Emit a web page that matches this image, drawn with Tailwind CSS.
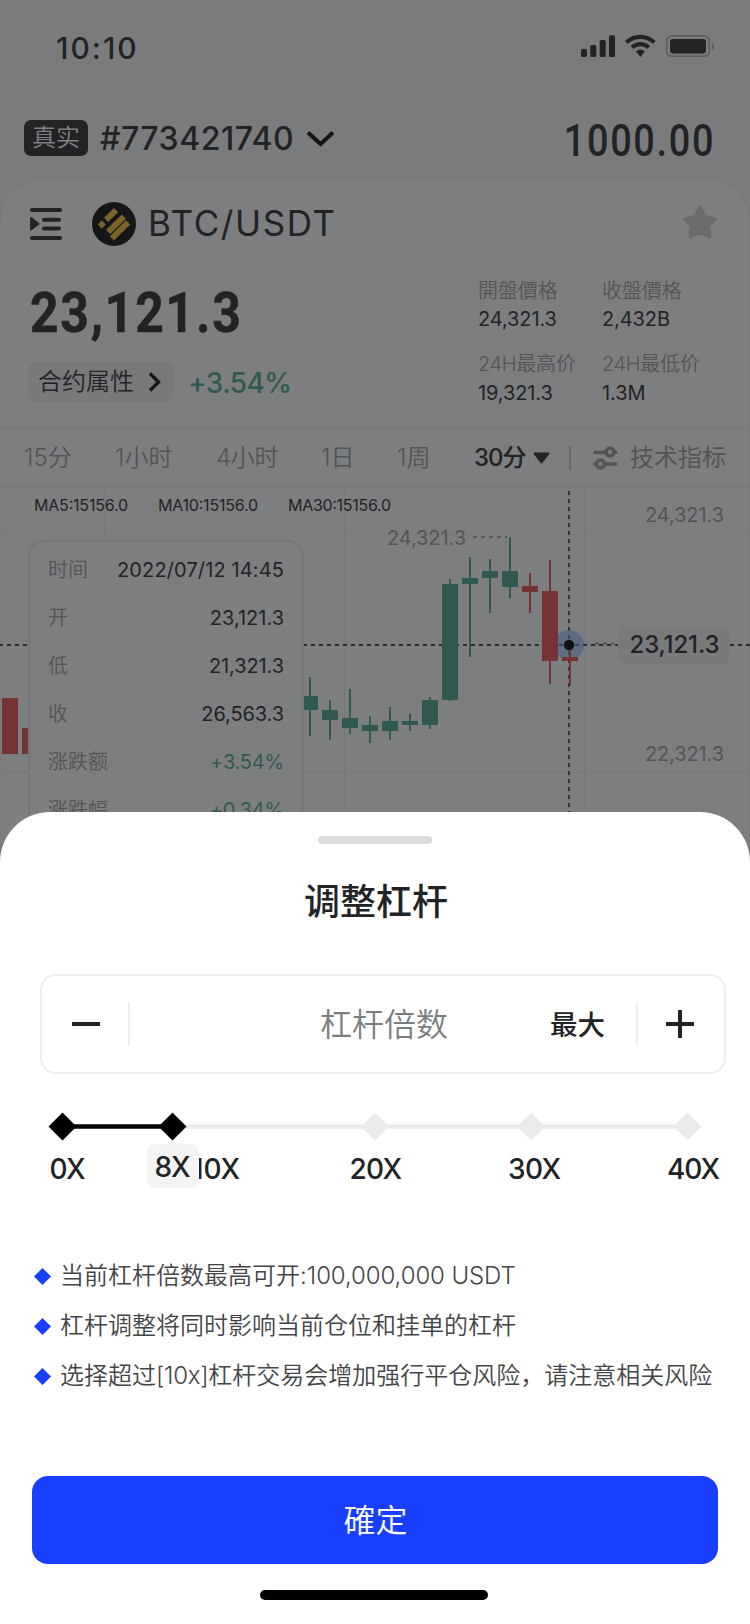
<!DOCTYPE html>
<html lang="zh">
<head>
<meta charset="utf-8">
<title>BTC/USDT</title>
<script src="https://cdn.jsdelivr.net/npm/@tailwindcss/browser@4"></script>
</head>
<body class="bg-[#7a7b7d]">
<div class="relative h-[1624px] w-[750px] overflow-hidden bg-[#7a7b7d] font-[Inter,'Noto_Sans_CJK_SC',sans-serif] whitespace-nowrap text-[#222325]">

  <!-- status bar -->
  <header class="flex h-[96px] items-center justify-between pr-9 pl-[56px]">
    <span class="text-[30px] leading-none font-[450] tracking-[2px]">10:10</span>
    <svg class="-mt-1" width="134" height="24" viewBox="0 0 134 24" fill="#222325">
      <rect x="1" y="15" width="6" height="8" rx="1.6"/><rect x="10.300" y="11" width="6" height="12" rx="1.600"/><rect x="19.700" y="6" width="6" height="17" rx="1.600"/><rect x="29" y="1.300" width="6" height="21.700" rx="1.600"/>
      <path d="M45 6.900C53.500-1.300 67.100-1.300 75.700 6.900L73 9.700C66 3.400 54.700 3.400 47.700 9.700Z"/>
      <path d="M50.600 12C56 6.700 64.700 6.700 70.200 12L67.300 14.800C63.300 11.300 57.400 11.300 53.500 14.800Z"/>
      <path d="M56 17.300Q60.400 13.800 64.800 17.300L60.400 23Z"/>
      <rect x="86.700" y="1.700" width="42.600" height="20.600" rx="5.500" fill="none" stroke="#5c5d5f" stroke-width="1.600"/>
      <rect x="90" y="5" width="36" height="14.500" rx="3"/>
      <path d="M132 8.500q2.400 1.200 2.400 3.700t-2.400 3.700z" fill="#5c5d5f"/>
    </svg>
  </header>

  <!-- account -->
  <section class="flex h-[84px] items-center pr-[35px] pl-6">
    <span class="flex h-9 w-16 items-center justify-center rounded-[7px] bg-[#222325] text-2xl font-[350] text-[#808183]">真实</span>
    <span class="mt-0.5 ml-[12px] w-[206px] text-[32px] leading-none font-[450] tracking-[0.5px]">#773421740</span>
    <svg class="mt-0.5" width="28" height="18" viewBox="0 0 28 18" fill="none" stroke="#151618" stroke-width="4"><path d="M2 2.500L14.500 14 27 2.500"/></svg>
    <span class="mt-[5px] ml-auto origin-right scale-x-[.86] font-[Roboto,sans-serif] text-[44px] leading-none font-medium tracking-[2px]">1000.00</span>
  </section>

  <!-- market card -->
  <main class="h-[700px] rounded-t-[40px] border border-[#78797b] bg-[#7d7e80]">
    <div class="flex h-[86px] items-center pr-[31px] pl-[29px]">
      <svg width="32" height="32" viewBox="0 0 32 32" stroke="#222325" stroke-width="4" stroke-linecap="round" fill="#222325"><path d="M2 2H30M14 11.700H29M14 20.500H29M2 30H30" /><path d="M1 10L8.500 15.700 1 21.500Z" stroke-width="2" stroke-linejoin="round"/></svg>
      <svg class="ml-[30px]" width="44" height="44" viewBox="0 0 44 44"><circle cx="22" cy="22" r="22" fill="#151618"/><g fill="#7a6429"><path d="M22 6L26.200 10.200 16.200 20 12 15.800Z"/><path d="M29.800 12.500L34 16.700 18.200 32 14 27.800Z"/><path d="M34 18.200L38.200 22.400 22 38.500 17.800 34.300Z"/><path d="M9.800 18.500L13.800 22.500 9.800 26.500 5.800 22.500Z"/></g></svg>
      <span class="-mt-0.5 ml-[12px] text-[35px] leading-none tracking-[1.6px]">BTC/USDT</span>
      <svg class="-mt-1 ml-auto" width="36" height="36" viewBox="0 0 36 36" fill="#6a6b6d" stroke="#6a6b6d" stroke-width="3" stroke-linejoin="round"><path d="M18 3L23 12.500 33.500 14.800 26.500 22.500 28 33 18 28.500 8 33 9.500 22.500 2.500 14.800 13 12.500Z"/></svg>
    </div>

    <div class="flex h-[162px] justify-between border-b border-[#747577]">
      <div class="pl-[27px]">
        <div class="mt-[16px] ml-[2px] origin-left scale-x-[.89] font-[Roboto,sans-serif] text-[56px] leading-[60px] font-bold tracking-[2px] [-webkit-text-stroke:0.6px]">23,121.3</div>
        <div class="mt-[19px] flex items-center gap-[14px]">
          <div class="flex h-10 w-[146px] items-center rounded-lg bg-[#78797b] pl-[10px] text-2xl font-[350]">合约属性
            <svg class="ml-[14px]" width="14" height="20" viewBox="0 0 14 20" fill="none" stroke="#151618" stroke-width="3.400"><path d="M2 1.500L10.500 10 2 18.500"/></svg>
          </div>
          <span class="mt-px text-[28px] leading-none font-[450] tracking-[-0.6px] text-[#30594f]">+3.54%</span>
        </div>
      </div>
      <div class="grid w-[271px] grid-cols-[124px_1fr] content-start pt-[9px] text-xl tracking-[-0.1px]">
        <div class="flex h-[73px] flex-col"><span class="h-[30px] leading-[30px] font-[350] text-[#535456]">開盤價格</span><span class="leading-[26px]">24,321.3</span></div>
        <div class="flex h-[73px] flex-col"><span class="h-[30px] leading-[30px] font-[350] text-[#535456]">收盤價格</span><span class="leading-[26px]">2,432B</span></div>
        <div class="flex flex-col"><span class="h-[31px] leading-[30px] font-[350] text-[#535456]"><span class="tracking-[-0.4px]">24H</span>最高价</span><span class="leading-[26px]">19,321.3</span></div>
        <div class="flex flex-col"><span class="h-[31px] leading-[30px] font-[350] text-[#535456]"><span class="tracking-[-0.4px]">24H</span>最低价</span><span class="leading-[26px]">1.3M</span></div>
      </div>
    </div>

    <!-- interval tabs -->
    <nav class="flex h-[58px] items-center border-b border-[#747577] pt-px pl-[23px] text-2xl font-[350] text-[#535456]">
      <span class="w-[91px]">15分</span><span class="w-[101px]">1小时</span><span class="w-[105px] tracking-[-0.3px]">4小时</span><span class="w-[76px]">1日</span><span class="w-[77px]">1周</span>
      <span class="w-[51px] font-medium tracking-[-1px] text-[#222325]">30分</span>
      <svg class="ml-[8px]" width="17" height="12" viewBox="0 0 17 12" fill="#222325" stroke="#222325" stroke-width="2" stroke-linejoin="round"><path d="M1.500 1.500H15.500L8.500 10.500Z"/></svg>
      <span class="ml-[19px] h-6 w-[2px] bg-[#68696b]"></span>
      <svg class="ml-[22px]" width="25" height="24" viewBox="0 0 25 24" fill="none" stroke="#535456" stroke-width="3.400" stroke-linecap="round"><path d="M2 6.500H12M21 6.500H23M2 18H3M12 18H23"/><circle cx="17" cy="6" r="4"/><circle cx="7.500" cy="18" r="4"/></svg>
      <span class="ml-[12px] font-normal">技术指标</span>
    </nav>

    <!-- chart -->
    <div class="relative -ml-px h-[390px] w-[750px]">
      <svg class="block" width="750" height="390" viewBox="0 487 750 390" font-size="20" fill="#535456">
        <path d="M104.500 487V880M344.500 487V880M584.500 487V880M2 534.500H750M2 772.500H750" stroke="#767779" fill="none"/>
        <g font-size="16" fill="#222325"><text x="34" y="510.500" textLength="94">MA5:15156.0</text><text x="158" y="510.500" textLength="100">MA10:15156.0</text><text x="288" y="510.500" textLength="103">MA30:15156.0</text></g>
        <text x="645" y="522" textLength="79">24,321.3</text>
        <text x="645" y="760.500" textLength="79">22,321.3</text>
        <text x="387" y="544.500" textLength="79">24,321.3</text>
        <path d="M473 537H507" stroke="#47484f" stroke-width="1.600" stroke-dasharray="4 4" fill="none"/>
        <path d="M595 643.500H614" stroke="#47484f" stroke-width="1.400" stroke-dasharray="4 4" fill="none"/>
        <g stroke="#2c2d2f" stroke-width="1.800" stroke-dasharray="4 4" fill="none"><path d="M-1 645H618M730 645H750"/><path d="M569 491V880"/></g>
        <circle cx="569" cy="645" r="15" fill="#405a82" fill-opacity=".5"/>
        <g fill="#30594f">
          <path d="M309 677h2v59h-2zM302 696h16v14h-16zM329 700h2v40h-2zM322 710h16v10h-16zM349 689h2v45h-2zM342 718h16v10h-16zM369 716h2v27h-2zM362 725h16v6h-16z"/>
          <path d="M389 707h2v33h-2zM382 721h16v10h-16zM409 714h2v17h-2zM402 721h16v4h-16zM429 697h2v32h-2zM422 700h16v25h-16zM449 579h2v122h-2zM442 584h16v116h-16z"/>
          <path d="M469 557h2v100h-2zM462 578h16v6h-16zM489 559h2v54h-2zM482 571h16v7h-16zM509 537h2v61h-2zM502 571h16v16h-16z"/>
        </g>
        <path fill="#763334" d="M2 698h16v56H2zM22 728h16v26H22zM529 573h2v40h-2zM522 586h16v6h-16zM549 560h2v124h-2zM542 591h16v70h-16zM569 645h2v40h-2zM562 657h16v4h-16z"/>
        <circle cx="569" cy="645" r="5.200" fill="#111214"/>
        <rect x="618" y="625" width="112" height="39" rx="8" fill="#787a7b"/>
        <text x="629.500" y="652.500" textLength="90" font-size="24" fill="#222325" font-weight="500">23,121.3</text>
      </svg>
      <!-- candle details -->
      <dl class="absolute top-[53px] left-[28px] h-[330px] w-[276px] rounded-2xl border-2 border-[#757678] bg-[#7d7e80] pt-1 pr-[18px] pl-[18px] text-xl [&_dt]:font-[350] [&_dt]:text-[#535456] [&>div]:flex [&>div]:h-12 [&>div]:items-center [&>div]:justify-between">
        <div><dt>时间</dt><dd class="tracking-[0.12px]">2022/07/12 14:45</dd></div>
        <div><dt>开</dt><dd>23,121.3</dd></div>
        <div><dt>低</dt><dd class="tracking-[-0.1px]">21,321.3</dd></div>
        <div><dt>收</dt><dd class="tracking-[-0.1px]">26,563.3</dd></div>
        <div><dt>涨跌额</dt><dd class="tracking-[-0.2px] text-[#30594f]">+3.54%</dd></div>
        <div><dt>涨跌幅</dt><dd class="tracking-[-0.2px] text-[#30594f]">+0.34%</dd></div>
      </dl>
    </div>
  </main>

  <!-- leverage sheet -->
  <section class="absolute inset-x-0 bottom-0 flex h-[812px] flex-col rounded-t-[50px] bg-white pt-6 text-[#222325]">
    <div class="h-2 w-[114px] shrink-0 self-center rounded bg-[#dcdcdc]"></div>
    <h2 class="mt-[31px] pl-[2px] text-center text-[36px] leading-[54px] font-medium">调整杠杆</h2>

    <div class="mt-[45px] mr-6 ml-10 flex h-[100px] shrink-0 items-center rounded-2xl border-2 border-[#eeeeee]">
      <span class="ml-[30px] h-1 w-7 bg-[#222325]"></span>
      <span class="ml-[28px] h-11 w-[2px] bg-[#eeeeee]"></span>
      <span class="mt-0.5 ml-[190px] text-[32px] font-[350] text-[#7a7d80]">杠杆倍数</span>
      <span class="mt-[3px] ml-[102px] text-[27.500px] font-medium">最大</span>
      <span class="ml-auto h-11 w-[2px] bg-[#eeeeee]"></span>
      <svg class="mr-[30px] ml-[28px]" width="28" height="28" viewBox="0 0 28 28" stroke="#222325" stroke-width="4"><path d="M0 14H28M14 0V28"/></svg>
    </div>

    <svg class="mt-[36px] block shrink-0" width="750" height="82" viewBox="0 1110 750 82" font-size="28" font-weight="450" fill="#222325">
      <path d="M172 1126.500H687" stroke="#ebebeb" stroke-width="4.500"/>
      <path d="M375 1112.500l14 14-14 14-14-14zM531 1112.500l14 14-14 14-14-14zM687.500 1112.500l14 14-14 14-14-14z" fill="#ebebeb"/>
      <path d="M62 1126.500H172" stroke="#000" stroke-width="4.500"/>
      <path d="M62.500 1112.500l14 14-14 14-14-14zM172.500 1112.500l14 14-14 14-14-14z" fill="#000"/>
      <g><text x="49.500" y="1178.500" textLength="36">0X</text><text x="192" y="1178.500" textLength="48">10X</text><text x="349.500" y="1178.500" textLength="52.500">20X</text><text x="508" y="1178.500" textLength="53">30X</text><text x="667" y="1178.500" textLength="53">40X</text></g>
      <path d="M167 1145l5.500-4 5.500 4z" fill="#f3f3f3"/>
      <rect x="147" y="1144" width="52" height="44" rx="8" fill="#f3f3f3"/>
      <text x="154.500" y="1176.500" textLength="36">8X</text>
    </svg>

    <ul class="mt-[59px] ml-[34px] text-2xl leading-[50px] font-[350] text-[#444547] [&>li]:flex [&>li]:items-center [&>li]:gap-[9px]">
      <li><svg width="17" height="17" viewBox="0 0 17 17" fill="#183eff"><path d="M8.500 0L17 8.500 8.500 17 0 8.500Z"/></svg><span>当前杠杆倍数最高可开:<span class="tracking-[-0.1px]">100,000,000 USDT</span></span></li>
      <li><svg width="17" height="17" viewBox="0 0 17 17" fill="#183eff"><path d="M8.500 0L17 8.500 8.500 17 0 8.500Z"/></svg><span>杠杆调整将同时影响当前仓位和挂单的杠杆</span></li>
      <li><svg width="17" height="17" viewBox="0 0 17 17" fill="#183eff"><path d="M8.500 0L17 8.500 8.500 17 0 8.500Z"/></svg><span>选择超过<span class="tracking-[-0.3px]">[10x]</span>杠杆交易会增加强行平仓风险，请注意相关风险</span></li>
    </ul>

    <button class="mx-8 mt-[75px] h-[88px] shrink-0 rounded-2xl bg-[#183eff] pt-0.5 pl-[1px] text-[32px] font-[350] text-white">確定</button>
    <div class="mt-[26px] mr-[2px] h-[10px] w-[228px] shrink-0 self-center rounded-full bg-black"></div>
  </section>
</div>
</body>
</html>
